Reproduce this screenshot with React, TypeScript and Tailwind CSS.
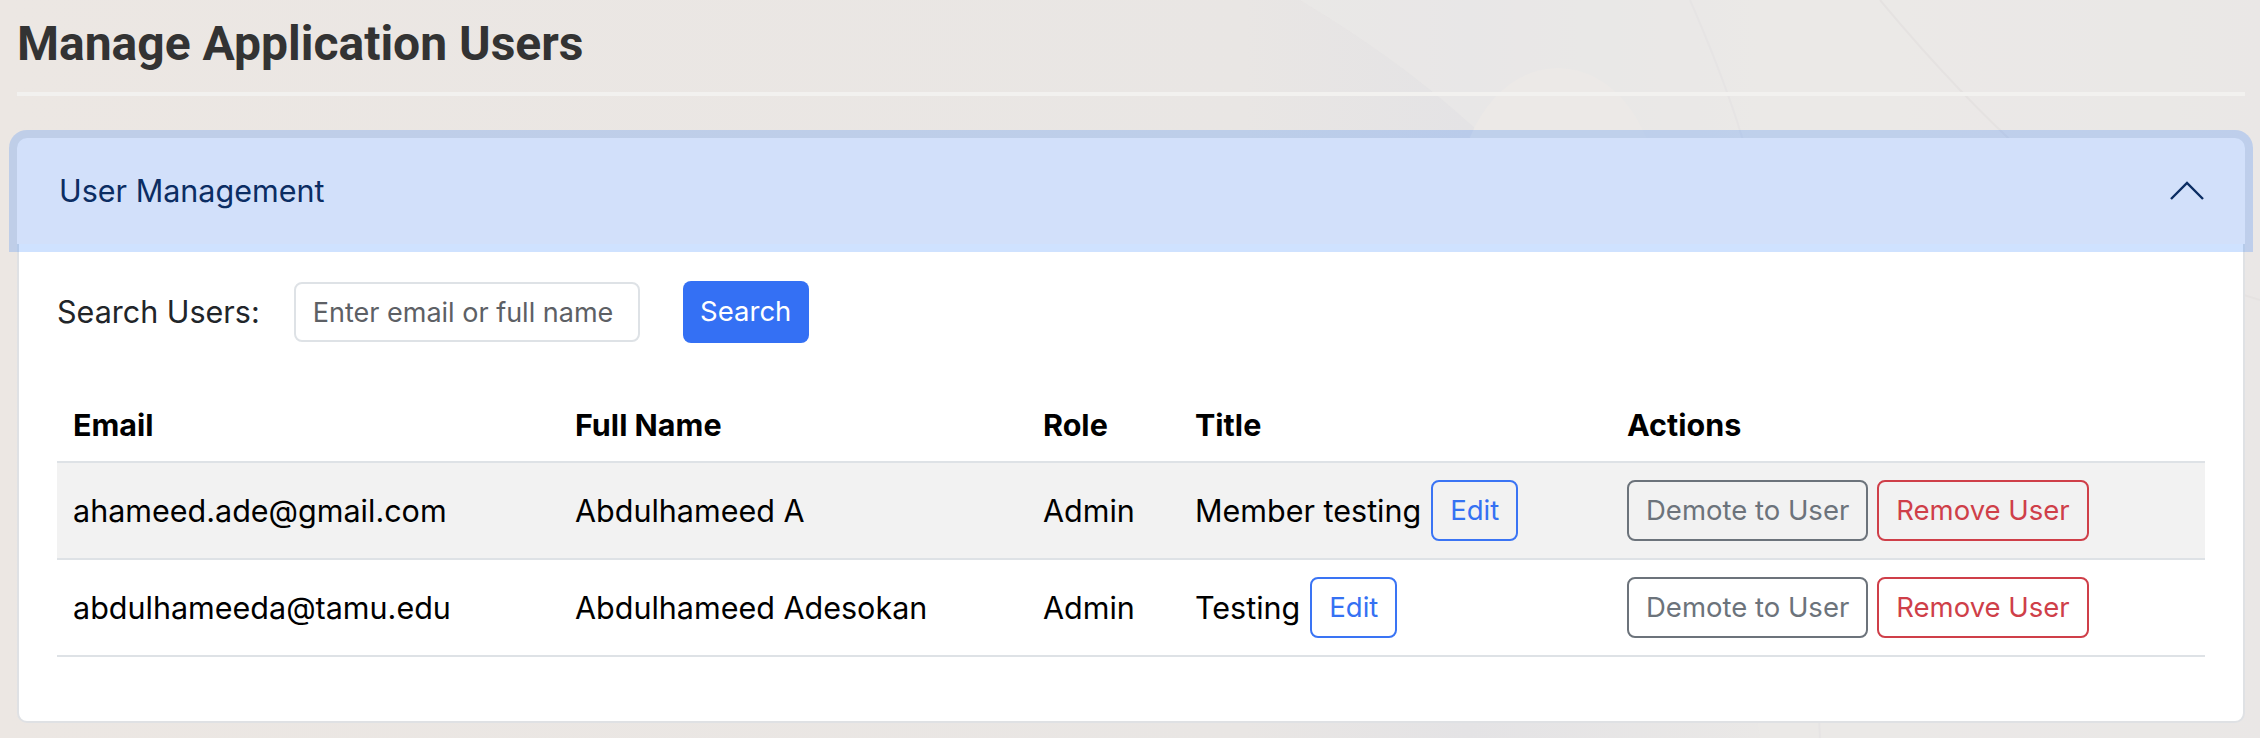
import React from "react";

const rows = [
  { email: "ahameed.ade@gmail.com", name: "Abdulhameed A", role: "Admin", title: "Member testing", striped: true },
  { email: "abdulhameeda@tamu.edu", name: "Abdulhameed Adesokan", role: "Admin", title: "Testing", striped: false },
];

function Background() {
  return (
    <svg className="absolute inset-0 h-full w-full" viewBox="0 0 2260 738" preserveAspectRatio="none">
      <defs>
        <linearGradient id="bgg" x1="0" y1="0" x2="1" y2="0">
          <stop offset="0" stopColor="#ece7e3" />
          <stop offset="0.55" stopColor="#e9e6e4" />
          <stop offset="0.65" stopColor="#e4e3e5" />
          <stop offset="0.8" stopColor="#ebe9e7" />
          <stop offset="1" stopColor="#e8e4e3" />
        </linearGradient>
      </defs>
      <rect width="2260" height="738" fill="url(#bgg)" />
      <path d="M1300 0 C1500 120 1700 300 1760 738 L2260 738 L2260 0 Z" fill="#ebe9e7" opacity="0.6" />
      <ellipse cx="1558" cy="200" rx="100" ry="132" fill="#ece9e7" />
      <path d="M1880 0 C1980 120 2120 260 2260 300" stroke="#e5e2e1" strokeWidth="2" fill="none" />
      <path d="M1690 0 C1760 160 1800 300 1820 738" stroke="#e6e4e4" strokeWidth="2" fill="none" />
    </svg>
  );
}

function OutlineBtn({ children, color }: { children: React.ReactNode; color: "blue" | "gray" | "red" }) {
  const cls =
    color === "blue"
      ? "border-[#3a74f4] text-[#3571f3]"
      : color === "gray"
      ? "border-[#6c737b] text-[#6c737b]"
      : "border-[#cf3f49] text-[#cf3f49]";
  return (
    <button
      className={`inline-flex h-[61px] items-center rounded-[8px] border-2 bg-transparent px-[17px] text-[27.5px] leading-none ${cls}`}
    >
      {children}
    </button>
  );
}

export default function App() {
  return (
    <div
      className="relative min-h-[738px] w-[2260px] overflow-hidden text-[#212529]"
      style={{ fontFamily: "Inter, 'Noto Sans', sans-serif" }}
    >
      <Background />
      <div className="relative pl-[17px] pr-[15px]">
        <h3
          className="mt-[14px] h-[60px] text-[48px] font-bold leading-[60px] text-[#333333]"
          style={{ fontFamily: "Roboto, 'Noto Sans', sans-serif" }}
        >
          Manage Application Users
        </h3>
        <div className="mt-[18px] h-[4px] bg-[#f2f1ef]" />

        <div className="mt-[42px] rounded-[10px] border-2 border-[#dfe1e4] bg-white">
          <div className="relative z-10 -m-[2px] flex h-[106px] items-center justify-between rounded-t-[10px] bg-[#d2e0fa] pl-[42px] pr-[40px] shadow-[0_0_0_8px_rgba(13,110,253,0.2)]">
            <span className="text-[30.5px] text-[#0b2d63]">User Management</span>
            <svg width="36" height="20" viewBox="0 0 36 20" fill="none">
              <path d="M2 18 L18 2 L34 18" stroke="#0b2d63" strokeWidth="2.4" />
            </svg>
          </div>

          <div className="px-[38px] pb-[64px] pt-[39px]">
            <div className="flex h-[62px] items-center">
              <span className="text-[30.5px]">Search Users:</span>
              <input
                placeholder="Enter email or full name"
                className="ml-[34px] h-[60px] w-[346px] rounded-[8px] border-2 border-[#dee2e6] bg-white px-[17px] text-[27px] placeholder:text-[#5d6065] outline-none"
              />
              <button className="ml-[43px] h-[62px] w-[126px] rounded-[8px] bg-[#3470f4] text-[27.5px] text-white">
                Search
              </button>
            </div>

            <table className="mt-[45px] w-[2148px] table-fixed border-collapse text-[30.5px]">
              <thead>
                <tr className="border-b-2 border-[#dee2e6]">
                  <th className="w-[502px] px-[16px] py-[15px] text-left font-bold leading-[43px] text-black">Email</th>
                  <th className="w-[468px] px-[16px] py-[15px] text-left font-bold leading-[43px] text-black">Full Name</th>
                  <th className="w-[152px] px-[16px] py-[15px] text-left font-bold leading-[43px] text-black">Role</th>
                  <th className="w-[432px] px-[16px] py-[15px] text-left font-bold leading-[43px] text-black">Title</th>
                  <th className="w-[594px] px-[16px] py-[15px] text-left font-bold leading-[43px] text-black">Actions</th>
                </tr>
              </thead>
              <tbody>
                {rows.map((r) => (
                  <tr key={r.email} className={`border-b-2 border-[#dee2e6] ${r.striped ? "bg-[#f2f2f2]" : "bg-white"}`}>
                    <td className="h-[97px] px-[16px] align-middle leading-[43px] text-black">{r.email}</td>
                    <td className="h-[97px] px-[16px] align-middle leading-[43px] text-black">{r.name}</td>
                    <td className="h-[97px] px-[16px] align-middle leading-[43px] text-black">{r.role}</td>
                    <td className="h-[97px] px-[16px] align-middle text-black">
                      <div className="flex items-center gap-[10px]">
                        <span className="leading-[43px]">{r.title}</span>
                        <OutlineBtn color="blue">Edit</OutlineBtn>
                      </div>
                    </td>
                    <td className="h-[97px] px-[16px] align-middle">
                      <div className="flex items-center gap-[9px]">
                        <OutlineBtn color="gray">Demote to User</OutlineBtn>
                        <OutlineBtn color="red">Remove User</OutlineBtn>
                      </div>
                    </td>
                  </tr>
                ))}
              </tbody>
            </table>
          </div>
        </div>
      </div>
    </div>
  );
}
